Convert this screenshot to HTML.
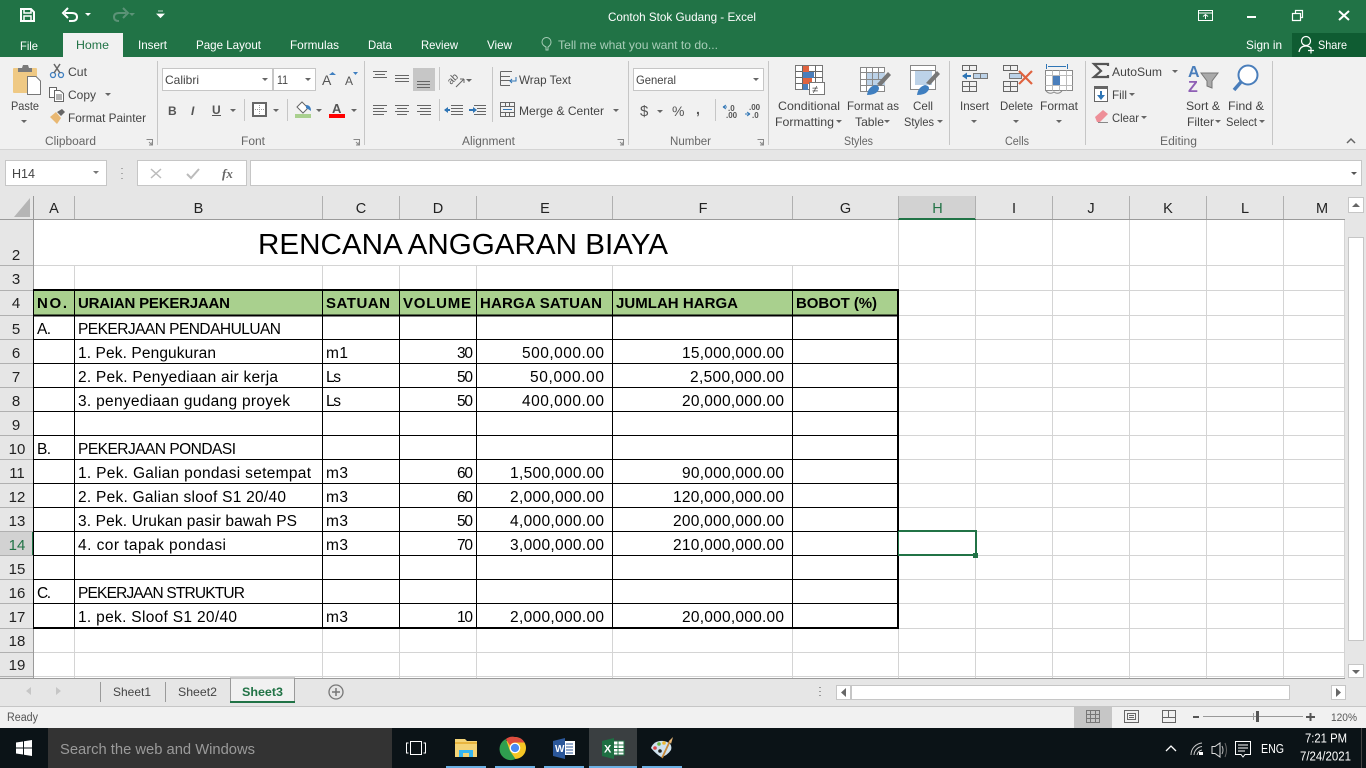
<!DOCTYPE html>
<html><head><meta charset="utf-8"><title>Contoh Stok Gudang - Excel</title>
<style>
html,body{margin:0;padding:0;width:1366px;height:768px;overflow:hidden;background:#fff}
svg{display:block;position:absolute;left:0;top:0}
text{font-family:"Liberation Sans",sans-serif;white-space:pre}
.r{font-size:12px;fill:#444}
.w{font-size:12px;fill:#fff}
.g{font-size:11.5px;fill:#666}
.c{font-size:15.5px;fill:#000}
.b{font-size:15px;fill:#000;font-weight:bold}
.h{font-size:14.5px;fill:#222;text-anchor:middle}
.n{font-size:15px;fill:#222;text-anchor:middle}
.t{fill:#666}
.l{stroke:#666;fill:none}
.s{stroke:#c6c6c6;fill:none}
</style></head><body>
<svg width="1366" height="768" viewBox="0 0 1366 768" xmlns="http://www.w3.org/2000/svg">
<defs><path id="d" d="M-3 0H3L0 3Z"/></defs>

<!-- title bar -->
<rect width="1366" height="57" fill="#217346"/>
<rect x="1292" y="33" width="74" height="24" fill="#0f5c32"/>
<rect x="63" y="33" width="60" height="24" fill="#f1f1f1"/>
<g fill="none" stroke="#fff" stroke-width="2">
<path d="M21 9H31L34 12V21H21Z"/><path d="M24 9V13H31V9M24 21V16H31V21" stroke-width="1.5"/>
<path d="M65 13H72Q77 13 77 17Q77 21 72 21H69" stroke-width="2"/>
</g>
<path d="M68 8L63 13L68 18" fill="none" stroke="#fff" stroke-width="2"/>
<use href="#d" x="88" y="13" fill="#fff"/>
<path d="M126 13H119Q114 13 114 17Q114 21 119 21M123 8L128 13L123 18" fill="none" stroke="#5c9377" stroke-width="2"/>
<use href="#d" x="132" y="13" fill="#5c9377"/>
<path d="M158 11H163M157 14H164L160.500 17.500Z" fill="#fff" stroke="#fff" stroke-width=".8"/>
<text class="w" x="608" y="21" textLength="148" lengthAdjust="spacingAndGlyphs">Contoh Stok Gudang - Excel</text>
<rect x="1198.500" y="10.500" width="14" height="10" fill="none" stroke="#fff"/><path d="M1198 13H1213M1205.500 19V14.500M1203 16.500L1205.500 14.500L1208 16.500" fill="none" stroke="#fff"/>
<rect x="1247" y="16" width="9" height="2" fill="#fff"/>
<path d="M1292.500 13.500H1300.500V20.500H1292.500ZM1295.500 13V10.500H1302.500V17.500H1300.500" fill="none" stroke="#fff" stroke-width="1.200"/>
<path d="M1339 11L1349 20M1349 11L1339 20" stroke="#fff" stroke-width="2"/>

<text class="w" x="20" y="50" textLength="18" lengthAdjust="spacingAndGlyphs">File</text>
<text x="76" y="49" font-size="12" fill="#217346" textLength="33" lengthAdjust="spacingAndGlyphs">Home</text>
<text class="w" x="138" y="49" textLength="29" lengthAdjust="spacingAndGlyphs">Insert</text>
<text class="w" x="196" y="49" textLength="65" lengthAdjust="spacingAndGlyphs">Page Layout</text>
<text class="w" x="290" y="49" textLength="49" lengthAdjust="spacingAndGlyphs">Formulas</text>
<text class="w" x="368" y="49" textLength="24" lengthAdjust="spacingAndGlyphs">Data</text>
<text class="w" x="421" y="49" textLength="37" lengthAdjust="spacingAndGlyphs">Review</text>
<text class="w" x="487" y="49" textLength="25" lengthAdjust="spacingAndGlyphs">View</text>
<path d="M546 50V47Q542 45 542 42A4.500 4.500 0 0 1 551 42Q551 45 548 47V50Z" fill="none" stroke="#a8cdb8"/>
<text x="558" y="49" font-size="12" fill="#a8cdb8" textLength="160" lengthAdjust="spacingAndGlyphs">Tell me what you want to do...</text>
<text class="w" x="1246" y="49" textLength="36" lengthAdjust="spacingAndGlyphs">Sign in</text>
<circle cx="1306" cy="41" r="4.500" fill="none" stroke="#fff" stroke-width="1.200"/><path d="M1299 52Q1300 46 1306 46Q1309 46 1311 48M1308 50.500H1314M1311 47.500V53.500" fill="none" stroke="#fff" stroke-width="1.200"/>
<text class="w" x="1318" y="49" textLength="29" lengthAdjust="spacingAndGlyphs">Share</text>

<!-- ribbon -->
<rect y="57" width="1366" height="92" fill="#f1f1f1"/>
<rect y="149" width="1366" height="1" fill="#d4d4d4"/>
<rect y="150" width="1366" height="46" fill="#e6e6e6"/>
<g fill="#c6c6c6" shape-rendering="crispEdges">
<rect x="157" y="61" width="1" height="84"/><rect x="364" y="61" width="1" height="84"/><rect x="628" y="61" width="1" height="84"/><rect x="768" y="61" width="1" height="84"/><rect x="949" y="61" width="1" height="84"/><rect x="1085" y="61" width="1" height="84"/><rect x="1272" y="61" width="1" height="84"/>
<rect x="244" y="99" width="1" height="22"/><rect x="287" y="99" width="1" height="22"/><rect x="439" y="67" width="1" height="23"/><rect x="439" y="99" width="1" height="22"/><rect x="492" y="67" width="1" height="55"/><rect x="715" y="99" width="1" height="22"/>
</g>

<!-- clipboard -->
<rect x="13" y="68" width="24" height="25" rx="1" fill="#efc984"/>
<path d="M18 72V68H22L23 65H28L29 68H32V72Z" fill="#7a7a7a"/>
<path d="M27.500 76.500H36L40.500 81V94.500H27.500Z" fill="#fff" stroke="#777"/>
<text class="r" x="11" y="110" textLength="28" lengthAdjust="spacingAndGlyphs">Paste</text>
<use href="#d" x="24" y="120" class="t"/>
<circle cx="53" cy="75" r="2.500" fill="none" stroke="#3f7fc0" stroke-width="1.300"/><circle cx="61" cy="75" r="2.500" fill="none" stroke="#3f7fc0" stroke-width="1.300"/>
<path d="M54 73L60 64M60 73L54 64" stroke="#666" stroke-width="1.500"/>
<text class="r" x="68" y="76" textLength="19" lengthAdjust="spacingAndGlyphs">Cut</text>
<path d="M49.500 87.500H56.500V97.500H49.500Z" fill="#fff" stroke="#666"/><path d="M54.500 90.500H60L63.500 93.500V101.500H54.500Z" fill="#fff" stroke="#666"/><path d="M56 95H62M56 97H62M56 99H62" stroke="#666"/>
<text class="r" x="68" y="99" textLength="28" lengthAdjust="spacingAndGlyphs">Copy</text>
<use href="#d" x="108" y="93" class="t"/>
<path d="M50 117L56 112L61 118L57 124Q53 120 50 117Z" fill="#e9b872"/><path d="M57 112L62 109L65 112L61 116Z" fill="#666"/>
<text class="r" x="68" y="122" textLength="78" lengthAdjust="spacingAndGlyphs">Format Painter</text>
<text class="g" x="45" y="145" textLength="51" lengthAdjust="spacingAndGlyphs">Clipboard</text>
<path d="M146.500 139.500H152.500V145.500M149 142L152 145M152 142V145H149" fill="none" stroke="#888"/>

<!-- font -->
<rect x="162.500" y="68.500" width="110" height="22" fill="#fff" stroke="#c6c6c6"/>
<rect x="273.500" y="68.500" width="42" height="22" fill="#fff" stroke="#c6c6c6"/>
<text x="165" y="84" font-size="12" fill="#444" textLength="34" lengthAdjust="spacingAndGlyphs">Calibri</text>
<text x="277" y="84" font-size="12" fill="#444" textLength="11" lengthAdjust="spacingAndGlyphs">11</text>
<use href="#d" x="265" y="78" class="t"/><use href="#d" x="308" y="78" class="t"/>
<text x="322" y="85" font-size="14" fill="#555">A</text><path d="M329 75H336L332.500 72Z" fill="#3f7fc0"/>
<text x="345" y="85" font-size="12" fill="#555">A</text><path d="M353 72H358L355.500 75Z" fill="#3f7fc0"/>
<text x="168" y="115" font-size="12" font-weight="bold" fill="#555">B</text>
<text x="191" y="115" font-size="12" font-weight="bold" font-style="italic" fill="#555">I</text>
<text x="212" y="114" font-size="12" font-weight="bold" fill="#555">U</text><rect x="212" y="115" width="9" height="1" fill="#555"/>
<use href="#d" x="233" y="109" class="t"/>
<rect x="253" y="103" width="13" height="13" fill="#fff" stroke="#666" stroke-width="2"/><path d="M259.500 105V114M255 109.500H264" stroke="#999" stroke-dasharray="1 1"/>
<use href="#d" x="276" y="109" class="t"/>
<path d="M297 107L302 102L308 108L303 113Z" fill="#fff" stroke="#666"/><path d="M306 105Q311 105 311 111Q308 109 306 108Z" fill="#3f7fc0"/>
<rect x="295" y="114" width="16" height="4" fill="#a9d08e"/>
<use href="#d" x="319" y="109" class="t"/>
<text x="332" y="113" font-size="13" font-weight="bold" fill="#555">A</text>
<rect x="329" y="114" width="16" height="4" fill="#f00"/>
<use href="#d" x="354" y="109" class="t"/>
<text class="g" x="241" y="145" textLength="24" lengthAdjust="spacingAndGlyphs">Font</text>
<path d="M353.500 139.500H359.500V145.500M356 142L359 145M359 142V145H356" fill="none" stroke="#888"/>

<!-- alignment -->
<rect x="413" y="68" width="22" height="23" fill="#c6c6c6"/>
<path class="l" d="M373 71.500H387M375 74.500H385M373 77.500H387M395 75.500H409M395 78.500H409M395 81.500H409M417 81.500H430M417 84.500H430M417 87.500H430"/>
<path class="l" d="M373 105.500H387M373 108.500H384M373 111.500H387M373 114.500H384M395 105.500H409M397 108.500H407M395 111.500H409M397 114.500H407M417 105.500H431M420 108.500H431M417 111.500H431M420 114.500H431"/>
<text transform="translate(451 85) rotate(-45)" font-size="10" fill="#555">ab</text>
<path d="M456 87L464 79M464 79V83M464 79H460" fill="none" stroke="#666"/>
<use href="#d" x="469" y="79" class="t"/>
<path class="l" d="M451 105.500H463M451 108.500H463M451 111.500H463M451 114.500H463"/><path d="M445 110H450" stroke="#2f75b5" stroke-width="2"/><path d="M444 110L448 107V113Z" fill="#2f75b5"/>
<path class="l" d="M474 105.500H486M477 108.500H486M477 111.500H486M474 114.500H486"/><path d="M469 110H474" stroke="#2f75b5" stroke-width="2"/><path d="M477 110L473 107V113Z" fill="#2f75b5"/>
<path class="l" d="M500.500 71.500H512M500.500 76.500H510M500.500 80.500H510M500.500 85.500H510M500.500 71.500V85.500"/><path d="M516 77V81H510M512 79L510 81L512 83" fill="none" stroke="#2f75b5"/>
<text class="r" x="519" y="84" textLength="52" lengthAdjust="spacingAndGlyphs">Wrap Text</text>
<rect x="500.500" y="102.500" width="14" height="14" fill="none" stroke="#666"/><path class="l" d="M500.500 106.500H514.500M500.500 112.500H514.500M505.500 102.500V106.500M509.500 102.500V106.500M505.500 112.500V116.500M509.500 112.500V116.500"/><path d="M503 109.500H512" stroke="#2f75b5"/>
<text class="r" x="519" y="115" textLength="85" lengthAdjust="spacingAndGlyphs">Merge &amp; Center</text>
<use href="#d" x="616" y="109" class="t"/>
<text class="g" x="462" y="145" textLength="53" lengthAdjust="spacingAndGlyphs">Alignment</text>
<path d="M617.500 139.500H623.500V145.500M620 142L623 145M623 142V145H620" fill="none" stroke="#888"/>

<!-- number -->
<rect x="633.500" y="68.500" width="130" height="22" fill="#fff" stroke="#c6c6c6"/>
<text x="636" y="84" font-size="12" fill="#444" textLength="40" lengthAdjust="spacingAndGlyphs">General</text>
<use href="#d" x="756" y="78" class="t"/>
<text x="640" y="116" font-size="15" fill="#555">$</text>
<use href="#d" x="660" y="110" class="t"/>
<text x="672" y="116" font-size="14" fill="#555">%</text>
<text x="696" y="114" font-size="14" font-weight="bold" fill="#555">,</text>
<text x="728" y="111" font-size="8" font-weight="bold" fill="#555">.0</text>
<text x="726" y="118" font-size="8" font-weight="bold" fill="#555">.00</text>
<path d="M723 107H727M723 107L726 105M723 107L726 109" fill="none" stroke="#2f75b5"/>
<text x="749" y="110" font-size="8" font-weight="bold" fill="#555">.00</text>
<text x="752" y="118" font-size="8" font-weight="bold" fill="#555">.0</text>
<path d="M745 114H750M750 114L747 112M750 114L747 116" fill="none" stroke="#2f75b5"/>
<text class="g" x="670" y="145" textLength="41" lengthAdjust="spacingAndGlyphs">Number</text>
<path d="M757.500 139.500H763.500V145.500M760 142L763 145M763 142V145H760" fill="none" stroke="#888"/>

<!-- styles -->
<rect x="795.500" y="65.500" width="27" height="24" fill="#fff" stroke="#777"/>
<path class="l" d="M802.500 65.500V89.500M815.500 65.500V89.500M795.500 71.500H822.500M795.500 77.500H822.500M795.500 83.500H822.500"/>
<rect x="803" y="66" width="6" height="6" fill="#e0633f"/><rect x="803" y="72" width="11" height="6" fill="#4a7ebb"/><rect x="803" y="78" width="9" height="6" fill="#e0633f"/><rect x="803" y="84" width="5" height="6" fill="#4a7ebb"/>
<rect x="809.500" y="82.500" width="15" height="12" fill="#fff" stroke="#777"/>
<text x="812" y="93" font-size="11" fill="#444">≠</text>
<text class="r" x="778" y="110" textLength="62" lengthAdjust="spacingAndGlyphs">Conditional</text>
<text class="r" x="775" y="126" textLength="59" lengthAdjust="spacingAndGlyphs">Formatting</text>
<use href="#d" x="839" y="120" class="t"/>
<rect x="860.500" y="67.500" width="24" height="24" fill="#fff" stroke="#888"/>
<rect x="867" y="72" width="18" height="14" fill="#bcd2e8"/>
<path d="M860.500 72.500H884.500M860.500 79.500H884.500M860.500 85.500H884.500M866.500 67.500V91.500M872.500 67.500V86M878.500 67.500V80" stroke="#888" fill="none"/>
<path d="M877 84L888 72L891 75L881 86Z" fill="#777"/>
<path d="M867 95Q868 87 875 85Q881 86 878 91Q875 95 867 95Z" fill="#3f7fc0"/>
<rect x="910.500" y="65.500" width="25" height="24" fill="#fff" stroke="#888"/>
<rect x="915" y="71" width="17" height="14" fill="#bcd2e8"/>
<path d="M910.500 70.500H935.500" stroke="#888"/>
<path d="M926 83L937 71L940 74L930 85Z" fill="#777"/>
<path d="M917 95Q918 87 925 85Q931 86 928 91Q925 95 917 95Z" fill="#3f7fc0"/>
<text class="r" x="847" y="110" textLength="52" lengthAdjust="spacingAndGlyphs">Format as</text>
<text class="r" x="855" y="126" textLength="29" lengthAdjust="spacingAndGlyphs">Table</text>
<use href="#d" x="887" y="120" class="t"/>
<text class="r" x="913" y="110" textLength="20" lengthAdjust="spacingAndGlyphs">Cell</text>
<text class="r" x="904" y="126" textLength="30" lengthAdjust="spacingAndGlyphs">Styles</text>
<use href="#d" x="940" y="120" class="t"/>
<text class="g" x="844" y="145" textLength="29" lengthAdjust="spacingAndGlyphs">Styles</text>

<!-- cells -->
<path class="l" d="M962.500 65.500H976.500V70.500H962.500ZM969.500 65.500V70.500M962.500 81.500H976.500V91.500H962.500ZM969.500 81.500V91.500M962.500 86.500H976.500"/>
<rect x="973.500" y="73.500" width="14" height="5" fill="#bcd2e8" stroke="#777"/><path d="M980.500 73.500V78.500" stroke="#777"/>
<path d="M963 76H971" stroke="#2f75b5" stroke-width="2"/><path d="M962 76L967 72.500V79.500Z" fill="#2f75b5"/>
<text class="r" x="960" y="110" textLength="29" lengthAdjust="spacingAndGlyphs">Insert</text>
<use href="#d" x="974" y="120" class="t"/>
<path class="l" d="M1003.500 65.500H1017.500V70.500H1003.500ZM1010.500 65.500V70.500M1003.500 81.500H1017.500V91.500H1003.500ZM1010.500 81.500V91.500M1003.500 86.500H1017.500"/>
<rect x="1009.500" y="73.500" width="12" height="5" fill="#bcd2e8" stroke="#777"/>
<path d="M1019 71L1032 84M1032 71L1019 84" stroke="#e0633f" stroke-width="2.200"/>
<text class="r" x="1000" y="110" textLength="33" lengthAdjust="spacingAndGlyphs">Delete</text>
<use href="#d" x="1016" y="120" class="t"/>
<path d="M1046.500 64V69M1067.500 64V69M1048 66.500H1066" stroke="#2f75b5" fill="none"/>
<rect x="1045.500" y="70.500" width="27" height="20" fill="#fff" stroke="#888"/>
<path d="M1052.500 70.500V90.500M1059.500 70.500V90.500M1066.500 70.500V90.500M1045.500 75.500H1072.500M1045.500 85.500H1072.500" stroke="#bbb" fill="none"/>
<rect x="1053" y="76" width="7" height="9" fill="#4a7ebb"/>
<path d="M1046 91Q1050 95 1054 92Q1058 95 1062 91" fill="none" stroke="#888"/>
<text class="r" x="1040" y="110" textLength="38" lengthAdjust="spacingAndGlyphs">Format</text>
<use href="#d" x="1059" y="120" class="t"/>
<text class="g" x="1005" y="145" textLength="24" lengthAdjust="spacingAndGlyphs">Cells</text>

<!-- editing -->
<path d="M1108 66V64H1094L1101 71L1094 77H1108V75" fill="none" stroke="#555" stroke-width="2.200"/>
<text class="r" x="1112" y="76" textLength="50" lengthAdjust="spacingAndGlyphs">AutoSum</text>
<use href="#d" x="1175" y="70" class="t"/>
<rect x="1094.500" y="86.500" width="13" height="15" fill="#fff" stroke="#666"/><rect x="1094" y="86" width="14" height="3" fill="#666"/>
<path d="M1101 91V98" stroke="#2f75b5" stroke-width="2"/><path d="M1097 95H1105L1101 100Z" fill="#2f75b5"/>
<text class="r" x="1112" y="99" textLength="15" lengthAdjust="spacingAndGlyphs">Fill</text>
<use href="#d" x="1132" y="93" class="t"/>
<path d="M1095 117L1103 110L1108 114L1100 122H1097Z" fill="#ee8f98"/><path d="M1098 122.500H1108" stroke="#888"/>
<text class="r" x="1112" y="122" textLength="27" lengthAdjust="spacingAndGlyphs">Clear</text>
<use href="#d" x="1144" y="116" class="t"/>
<text x="1188" y="77" font-size="16" font-weight="bold" fill="#4a7ebb">A</text>
<text x="1188" y="92" font-size="16" font-weight="bold" fill="#8e5fb5">Z</text>
<path d="M1201 73H1218L1212 81V88L1207 86V81Z" fill="#aaa" stroke="#777"/>
<text class="r" x="1186" y="110" textLength="34" lengthAdjust="spacingAndGlyphs">Sort &amp;</text>
<text class="r" x="1187" y="126" textLength="27" lengthAdjust="spacingAndGlyphs">Filter</text>
<use href="#d" x="1218" y="120" class="t"/>
<circle cx="1248" cy="75" r="9.500" fill="#fff" stroke="#4a7ebb" stroke-width="2"/><path d="M1241 82L1234 90" stroke="#4a7ebb" stroke-width="3.500"/>
<text class="r" x="1228" y="110" textLength="36" lengthAdjust="spacingAndGlyphs">Find &amp;</text>
<text class="r" x="1226" y="126" textLength="31" lengthAdjust="spacingAndGlyphs">Select</text>
<use href="#d" x="1262" y="120" class="t"/>
<text class="g" x="1160" y="145" textLength="37" lengthAdjust="spacingAndGlyphs">Editing</text>
<path d="M1347 143L1351 139L1355 143" fill="none" stroke="#666" stroke-width="1.500"/>

<!-- formula bar -->
<rect x="5.500" y="160.500" width="101" height="25" fill="#fff" stroke="#c6c6c6"/>
<text x="12" y="178" font-size="12.500" fill="#444" textLength="23" lengthAdjust="spacingAndGlyphs">H14</text>
<use href="#d" x="96" y="171" fill="#777"/>
<path d="M122 168V169M122 173V174M122 178V179" stroke="#aaa" stroke-width="2"/>
<rect x="137.500" y="160.500" width="109" height="25" fill="#fff" stroke="#c6c6c6"/>
<path d="M151 169L161 178M161 169L151 178" stroke="#bbb" stroke-width="1.500"/>
<path d="M187 174L191 178L199 169" fill="none" stroke="#bbb" stroke-width="2"/>
<text x="222" y="178" font-size="13" font-style="italic" font-weight="bold" style="font-family:'Liberation Serif',serif" fill="#666">fx</text>
<rect x="250.500" y="160.500" width="1111" height="25" fill="#fff" stroke="#c6c6c6"/>
<use href="#d" x="1354" y="172" fill="#555"/>

<!-- sheet -->
<rect x="0" y="196" width="1347" height="482" fill="#e6e6e6"/>
<rect x="34" y="220" width="1311" height="458" fill="#fff"/>
<path d="M30 198V217H14Z" fill="#b5b5b5"/>
<rect x="898" y="196" width="78" height="23" fill="#d2d2d2"/>
<rect x="898" y="218" width="78" height="2" fill="#217346"/>
<rect x="0" y="531" width="34" height="25" fill="#d2d2d2"/>
<rect x="32" y="531" width="2" height="25" fill="#217346"/>

<g shape-rendering="crispEdges" fill="none">
<path stroke="#d4d4d4" d="M74.500 265V678M322.500 265V678M399.500 265V678M476.500 265V678M612.500 265V678M792.500 265V678M898.500 220V678M975.500 220V678M1052.500 220V678M1129.500 220V678M1206.500 220V678M1283.500 220V678M1344.500 220V678M34 265.500H1345M34 290.500H1345M34 315.500H1345M34 339.500H1345M34 363.500H1345M34 387.500H1345M34 411.500H1345M34 435.500H1345M34 459.500H1345M34 483.500H1345M34 507.500H1345M34 531.500H1345M34 555.500H1345M34 579.500H1345M34 603.500H1345M34 628.500H1345M34 652.500H1345M34 676.500H1345"/>
<path stroke="#b0b0b0" d="M74.500 196V219M322.500 196V219M399.500 196V219M476.500 196V219M612.500 196V219M792.500 196V219M898.500 196V219M975.500 196V219M1052.500 196V219M1129.500 196V219M1206.500 196V219M1283.500 196V219M0 265.500H33M0 290.500H33M0 315.500H33M0 339.500H33M0 363.500H33M0 387.500H33M0 411.500H33M0 435.500H33M0 459.500H33M0 483.500H33M0 507.500H33M0 531.500H33M0 555.500H33M0 579.500H33M0 603.500H33M0 628.500H33M0 652.500H33M0 676.500H33"/>
<path stroke="#9a9a9a" d="M33.500 196V678M0 219.500H898M976 219.500H1345M1345.500 219V678"/>
</g>

<rect x="34" y="291" width="864" height="24" fill="#a9d08e"/>
<g shape-rendering="crispEdges" fill="none">
<path stroke="#000" d="M74.500 290V628M322.500 290V628M399.500 290V628M476.500 290V628M612.500 290V628M792.500 290V628M34 339.500H898M34 363.500H898M34 387.500H898M34 411.500H898M34 435.500H898M34 459.500H898M34 483.500H898M34 507.500H898M34 531.500H898M34 555.500H898M34 579.500H898M34 603.500H898"/>
<path stroke="#000" stroke-width="2" d="M33 290H899M33 315.500H899M33 628H899M898 289V629"/>
<path stroke="#000" d="M33.500 290V629"/>
</g>
<rect x="899" y="531" width="77" height="25" fill="#fff"/>
<path d="M899 531H976V555H899" fill="none" stroke="#217346" stroke-width="2" shape-rendering="crispEdges"/>
<path d="M898.500 531V556" stroke="#217346" shape-rendering="crispEdges"/>
<rect x="973" y="553" width="5" height="5" fill="#217346"/>

<!-- column headers -->
<text class="h" x="54" y="213">A</text><text class="h" x="198.500" y="213">B</text><text class="h" x="361" y="213">C</text><text class="h" x="438" y="213">D</text><text class="h" x="545" y="213">E</text><text class="h" x="703" y="213">F</text><text class="h" x="845.500" y="213">G</text><text class="h" x="937.500" y="213" style="fill:#217346">H</text><text class="h" x="1014" y="213">I</text><text class="h" x="1091" y="213">J</text><text class="h" x="1168" y="213">K</text><text class="h" x="1245" y="213">L</text><text class="h" x="1322" y="213">M</text>
<!-- row headers -->
<text class="n" x="16" y="260">2</text><text class="n" x="16" y="284">3</text><text class="n" x="16" y="308">4</text><text class="n" x="16" y="334">5</text><text class="n" x="16" y="358">6</text><text class="n" x="16" y="382">7</text><text class="n" x="16" y="406">8</text><text class="n" x="16" y="430">9</text><text class="n" x="17" y="454">10</text><text class="n" x="17" y="478">11</text><text class="n" x="17" y="502">12</text><text class="n" x="17" y="526">13</text><text class="n" x="17" y="550" style="fill:#217346">14</text><text class="n" x="17" y="574">15</text><text class="n" x="17" y="598">16</text><text class="n" x="17" y="622">17</text><text class="n" x="17" y="646">18</text><text class="n" x="17" y="670">19</text>

<!-- cells -->
<text x="258" y="254" font-size="29" fill="#000" textLength="410" lengthAdjust="spacingAndGlyphs">RENCANA ANGGARAN BIAYA</text>
<text class="b" x="37" y="308" textLength="30">NO.</text>
<text class="b" x="78" y="308" textLength="152">URAIAN PEKERJAAN</text>
<text class="b" x="326" y="308" textLength="64">SATUAN</text>
<text class="b" x="403" y="308" textLength="68">VOLUME</text>
<text class="b" x="480" y="308" textLength="122">HARGA SATUAN</text>
<text class="b" x="616" y="308" textLength="122">JUMLAH HARGA</text>
<text class="b" x="796" y="308" textLength="81">BOBOT (%)</text>

<text class="c" x="37" y="334" textLength="14">A.</text>
<text class="c" x="78" y="334" textLength="203">PEKERJAAN PENDAHULUAN</text>
<text class="c" x="78" y="358" textLength="138">1. Pek. Pengukuran</text>
<text class="c" x="326" y="358" textLength="22">m1</text>
<text class="c" x="457" y="358" textLength="16">30</text>
<text class="c" x="522" y="358" textLength="82">500,000.00</text>
<text class="c" x="682" y="358" textLength="102">15,000,000.00</text>
<text class="c" x="78" y="382" textLength="200">2. Pek. Penyediaan air kerja</text>
<text class="c" x="326" y="382" textLength="15">Ls</text>
<text class="c" x="457" y="382" textLength="16">50</text>
<text class="c" x="530" y="382" textLength="74">50,000.00</text>
<text class="c" x="690" y="382" textLength="94">2,500,000.00</text>
<text class="c" x="78" y="406" textLength="212">3. penyediaan gudang proyek</text>
<text class="c" x="326" y="406" textLength="15">Ls</text>
<text class="c" x="457" y="406" textLength="16">50</text>
<text class="c" x="522" y="406" textLength="82">400,000.00</text>
<text class="c" x="682" y="406" textLength="102">20,000,000.00</text>

<text class="c" x="37" y="454" textLength="14">B.</text>
<text class="c" x="78" y="454" textLength="158">PEKERJAAN PONDASI</text>
<text class="c" x="78" y="478" textLength="233">1. Pek. Galian pondasi setempat</text>
<text class="c" x="326" y="478" textLength="22">m3</text>
<text class="c" x="457" y="478" textLength="16">60</text>
<text class="c" x="510" y="478" textLength="94">1,500,000.00</text>
<text class="c" x="682" y="478" textLength="102">90,000,000.00</text>
<text class="c" x="78" y="502" textLength="208">2. Pek. Galian sloof S1 20/40</text>
<text class="c" x="326" y="502" textLength="22">m3</text>
<text class="c" x="457" y="502" textLength="16">60</text>
<text class="c" x="510" y="502" textLength="94">2,000,000.00</text>
<text class="c" x="673" y="502" textLength="111">120,000,000.00</text>
<text class="c" x="78" y="526" textLength="219">3. Pek. Urukan pasir bawah PS</text>
<text class="c" x="326" y="526" textLength="22">m3</text>
<text class="c" x="457" y="526" textLength="16">50</text>
<text class="c" x="510" y="526" textLength="94">4,000,000.00</text>
<text class="c" x="673" y="526" textLength="111">200,000,000.00</text>
<text class="c" x="78" y="550" textLength="148">4. cor tapak pondasi</text>
<text class="c" x="326" y="550" textLength="22">m3</text>
<text class="c" x="457" y="550" textLength="16">70</text>
<text class="c" x="510" y="550" textLength="94">3,000,000.00</text>
<text class="c" x="673" y="550" textLength="111">210,000,000.00</text>

<text class="c" x="37" y="598" textLength="14">C.</text>
<text class="c" x="78" y="598" textLength="167">PEKERJAAN STRUKTUR</text>
<text class="c" x="78" y="622" textLength="159">1. pek. Sloof S1 20/40</text>
<text class="c" x="326" y="622" textLength="22">m3</text>
<text class="c" x="457" y="622" textLength="16">10</text>
<text class="c" x="510" y="622" textLength="94">2,000,000.00</text>
<text class="c" x="682" y="622" textLength="102">20,000,000.00</text>

<!-- vertical scrollbar -->
<rect x="1345" y="196" width="21" height="511" fill="#e6e6e6"/>
<rect x="1348.500" y="197.500" width="15" height="15" fill="#fff" stroke="#c6c6c6"/>
<path d="M1352 207H1360L1356 203Z" fill="#666"/>
<rect x="1348.500" y="237.500" width="15" height="403" fill="#fff" stroke="#c6c6c6"/>

<!-- sheet tabs -->
<rect y="678" width="1366" height="29" fill="#e6e6e6"/>
<rect y="678" width="1345" height="1" fill="#9a9a9a"/>
<rect y="706" width="1366" height="1" fill="#c6c6c6"/>
<rect x="1348.500" y="664.500" width="15" height="13" fill="#fff" stroke="#c6c6c6"/>
<path d="M1352 670H1360L1356 674Z" fill="#666"/>
<path d="M31 687V695L26 691Z" fill="#c6c6c6"/><path d="M56 687V695L61 691Z" fill="#c6c6c6"/>
<path d="M100.500 682V702M165.500 682V702" stroke="#9a9a9a" shape-rendering="crispEdges"/>
<path d="M230.500 702V678H294.500V702" fill="#f1f1f1" stroke="#9a9a9a" shape-rendering="crispEdges"/>
<rect x="230" y="701" width="65" height="2" fill="#217346"/>
<text x="113" y="696" font-size="12" fill="#444" textLength="38" lengthAdjust="spacingAndGlyphs">Sheet1</text>
<text x="178" y="696" font-size="12" fill="#444" textLength="39" lengthAdjust="spacingAndGlyphs">Sheet2</text>
<text x="242" y="696" font-size="12" font-weight="bold" fill="#217346" textLength="41" lengthAdjust="spacingAndGlyphs">Sheet3</text>
<circle cx="336" cy="692" r="7" fill="none" stroke="#777" stroke-width="1.300"/><path d="M332 692H340M336 688V696" stroke="#777" stroke-width="1.500"/>
<path d="M820 687V688M820 691V692M820 695V696" stroke="#999" stroke-width="2"/>
<rect x="836.500" y="685.500" width="14" height="14" fill="#fff" stroke="#c6c6c6"/>
<path d="M846 688V697L841 692.500Z" fill="#666"/>
<rect x="851.500" y="685.500" width="438" height="14" fill="#fff" stroke="#c6c6c6"/>
<rect x="1331.500" y="685.500" width="14" height="14" fill="#fff" stroke="#c6c6c6"/>
<path d="M1336 688V697L1341 692.500Z" fill="#666"/>

<!-- status -->
<rect y="707" width="1366" height="21" fill="#f1f1f1"/>
<text x="7" y="721" font-size="11.500" fill="#555" textLength="31" lengthAdjust="spacingAndGlyphs">Ready</text>
<rect x="1074" y="707" width="38" height="21" fill="#c6c6c6"/>
<path d="M1086.500 710.500H1099.500V722.500H1086.500ZM1086.500 714.500H1099.500M1086.500 718.500H1099.500M1090.500 710.500V722.500M1095.500 710.500V722.500" fill="none" stroke="#777" shape-rendering="crispEdges"/>
<path d="M1124.500 710.500H1138.500V722.500H1124.500ZM1127.500 713.500H1135.500V719.500H1127.500ZM1129 715.500H1134M1129 717.500H1134" fill="none" stroke="#666" shape-rendering="crispEdges"/>
<path d="M1162.500 710.500H1175.500V722.500H1162.500ZM1168.500 710.500V717.500H1162.500M1168.500 717.500H1175.500" fill="none" stroke="#666" shape-rendering="crispEdges"/>
<rect x="1193" y="716" width="6" height="2" fill="#555"/>
<rect x="1203" y="716" width="100" height="1" fill="#999"/>
<rect x="1253" y="713" width="1" height="7" fill="#999"/>
<rect x="1256" y="711" width="3" height="11" fill="#555"/>
<path d="M1306 717H1315M1310.500 713V721" stroke="#555" stroke-width="2"/>
<text x="1331" y="721" font-size="11" fill="#555" textLength="26" lengthAdjust="spacingAndGlyphs">120%</text>

<!-- taskbar -->
<rect y="728" width="1366" height="40" fill="#0b1317"/>
<rect x="48" y="728" width="344" height="40" fill="#333"/>
<path d="M16 742.500L23 741.500V747.500H16ZM24 741.300L32 740V747.500H24ZM16 748.500H23V754.500L16 753.500ZM24 748.500H32V756L24 754.700Z" fill="#fff"/>
<text x="60" y="754" font-size="14.500" fill="#9a9a9a" textLength="195" lengthAdjust="spacingAndGlyphs">Search the web and Windows</text>
<rect x="410.500" y="741.500" width="11" height="13" fill="none" stroke="#fff"/><path d="M408.500 743H406.500V753H408.500M423.500 743H425.500V753H423.500" fill="none" stroke="#fff"/>

<rect x="589" y="728" width="48" height="38" fill="#3a3f41"/>
<g fill="#6bb0e4"><rect x="446" y="766" width="40" height="2"/><rect x="495" y="766" width="40" height="2"/><rect x="544" y="766" width="40" height="2"/><rect x="589" y="766" width="48" height="2"/><rect x="642" y="766" width="40" height="2"/></g>
<!-- explorer -->
<path d="M455 739H465L467 741H477V757H455Z" fill="#f4d477"/><rect x="455" y="742" width="22" height="2" fill="#e8b53f"/>
<path d="M459 757V750H473V757H469V753H463V757Z" fill="#35b6f2"/>
<!-- chrome -->
<circle cx="515" cy="748" r="11" fill="#f6c624"/>
<path d="M515 737A11 11 0 0 1 524.500 742.500H515A5.500 5.500 0 0 0 510 745.500L505.800 739A11 11 0 0 1 515 737Z" fill="#dd4c3f"/>
<path d="M505.800 739L510 751L515.500 759A11 11 0 0 1 505.800 739Z" fill="#2f9e4f"/>
<circle cx="515" cy="748" r="5.300" fill="#fff"/><circle cx="515" cy="748" r="4.100" fill="#4a8af4"/>
<!-- word -->
<rect x="563" y="741" width="12" height="14" fill="#fff"/><path d="M566 744H573M566 747H573M566 750H573M566 753H573" stroke="#2b579a"/>
<path d="M553 741L565 738V759L553 756Z" fill="#2b579a"/>
<text x="555" y="752" font-size="10" font-weight="bold" fill="#fff">W</text>
<!-- excel -->
<rect x="613" y="741" width="11" height="14" fill="#fff" stroke="#217346"/><path d="M613 745H624M613 748.500H624M613 752H624M618 741V755" stroke="#217346"/>
<path d="M602 741L614 738V759L602 756Z" fill="#1d6f42"/>
<text x="604" y="752.500" font-size="11" font-weight="bold" fill="#fff">X</text>
<!-- paint -->
<path d="M651 748Q654 740 664 741Q673 743 671 750Q667 756 661 757Q656 754 651 748Z" fill="#cfe2ee"/>
<circle cx="655" cy="748" r="1.800" fill="#d8474a"/><circle cx="659" cy="744" r="1.800" fill="#6dba46"/><circle cx="664" cy="743" r="1.800" fill="#efb730"/><circle cx="660" cy="751" r="1.800" fill="#222"/>
<path d="M662 758L670 741" stroke="#c98a3a" stroke-width="1.800"/><path d="M669 741L673 737L671 744Z" fill="#e8b878"/>

<!-- tray -->
<path d="M1166 751L1171 746L1176 751" fill="none" stroke="#fff" stroke-width="1.300"/>
<path d="M1191 755A12 12 0 0 1 1202 743M1194 755A9 9 0 0 1 1202 746.500M1197 755A6 6 0 0 1 1202 750" fill="none" stroke="#ccc"/><rect x="1199" y="752" width="4" height="3" fill="#fff"/>
<path d="M1212 746.500H1215L1220 743V757L1215 753.500H1212Z" fill="none" stroke="#ddd"/><path d="M1222 746Q1224 750 1222 754" fill="none" stroke="#bbb"/><path d="M1225 743Q1228 750 1225 757" fill="none" stroke="#666"/>
<path d="M1235.500 741.500H1250.500V754.500H1245L1243 757L1241 754.500H1235.500Z" fill="none" stroke="#fff"/><path d="M1238 745H1248M1238 748H1248M1238 751H1245" stroke="#fff"/>
<text x="1261" y="753" font-size="13" fill="#fff" textLength="23" lengthAdjust="spacingAndGlyphs">ENG</text>
<text x="1305" y="742.500" font-size="12.500" fill="#fff" textLength="42" lengthAdjust="spacingAndGlyphs">7:21 PM</text>
<text x="1300" y="760.500" font-size="12.500" fill="#fff" textLength="51" lengthAdjust="spacingAndGlyphs">7/24/2021</text>
<rect x="1361" y="728" width="1" height="40" fill="#444"/>
</svg>
</body></html>
